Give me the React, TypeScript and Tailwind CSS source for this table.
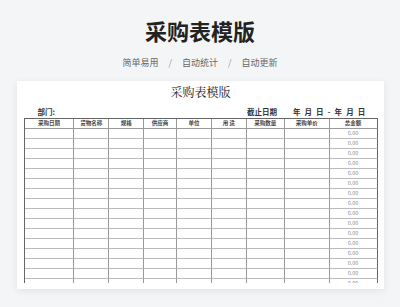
import React from 'react';

const COLUMNS = [
    { label: '采购日期', width: 'w-[50px]' },
    { label: '货物名称', width: 'w-[35px]' },
    { label: '规格', width: 'w-[35px]' },
    { label: '供应商', width: 'w-[33px]' },
    { label: '单位', width: 'w-[35px]' },
    { label: '用 途', width: 'w-[35px]' },
    { label: '采购数量', width: 'w-[38px]' },
    { label: '采购单价', width: 'w-[45px]' },
    { label: '总金额', width: 'w-[48px]' },
];

const ROWS = Array.from({ length: 16 }, (_, i) => i);

export default function App() {
    return (
        <div
            className="h-[307px] w-[400px] overflow-hidden bg-[#f4f5f7] flex flex-col items-center"
            style={{ fontFamily: '"Noto Sans CJK SC", "Noto Sans", sans-serif' }}
        >
            {/* Page heading */}
            <h1 className="mt-[16px] h-[28px] text-[22px] leading-[28px] font-bold text-[#222]">采购表模版</h1>
            <div className="mt-[13px] flex items-center gap-[8px] text-[9px] leading-[12px] text-[#666]">
                <span>简单易用</span>
                <span className="px-[2px] text-[#999]">/</span>
                <span>自动统计</span>
                <span className="px-[2px] text-[#999]">/</span>
                <span>自动更新</span>
            </div>

            {/* Sheet card */}
            <div className="mt-[12px] w-[367px] h-[208px] bg-white shadow-[0_2px_8px_rgba(0,0,0,0.08)] pt-[4px] pl-[7px] pr-[6px] flex flex-col overflow-hidden">
                <div className="text-center text-[12px] leading-[14px] text-[#222]" style={{ fontFamily: '"Noto Serif CJK SC", "Noto Sans CJK SC", serif' }}>采购表模版</div>

                <div className="mt-[6px] h-[12px] flex items-end text-[7.5px] leading-[10px] font-bold text-[#333]">
                    <span className="ml-[14px]">部门:</span>
                    <span className="ml-auto">截止日期</span>
                    <span className="ml-[16px] mr-[11px] tracking-[1.2px]">年 月 日 - 年 月 日</span>
                </div>

                <div className="mt-[1px] h-[165px] overflow-hidden">
                    <div className="w-[354px] border-l border-t border-[#666]">
                        <div className="flex h-[10px]">
                            {COLUMNS.map((col, i) => (
                                <div
                                    key={col.label}
                                    className={`${col.width} h-[10px] border-b border-r ${i === COLUMNS.length - 1 ? 'border-r-[#666]' : 'border-r-[#999]'} border-b-[#999] flex items-center justify-center text-[5.5px] leading-[9px] font-bold text-[#444]`}
                                >
                                    {col.label}
                                </div>
                            ))}
                        </div>
                        {ROWS.map((r) => (
                            <div key={r} className="flex h-[10px]">
                                {COLUMNS.map((col, i) => (
                                    <div
                                        key={col.label}
                                        className={`${col.width} h-[10px] border-b border-r ${i === COLUMNS.length - 1 ? 'border-r-[#666]' : 'border-r-[#999]'} border-b-[#bbb] flex items-center justify-center text-[5.5px] leading-[9px] text-[#888]`}
                                    >
                                        {i === COLUMNS.length - 1 ? '0.00' : ''}
                                    </div>
                                ))}
                            </div>
                        ))}
                    </div>
                </div>
            </div>
        </div>
    );
}
